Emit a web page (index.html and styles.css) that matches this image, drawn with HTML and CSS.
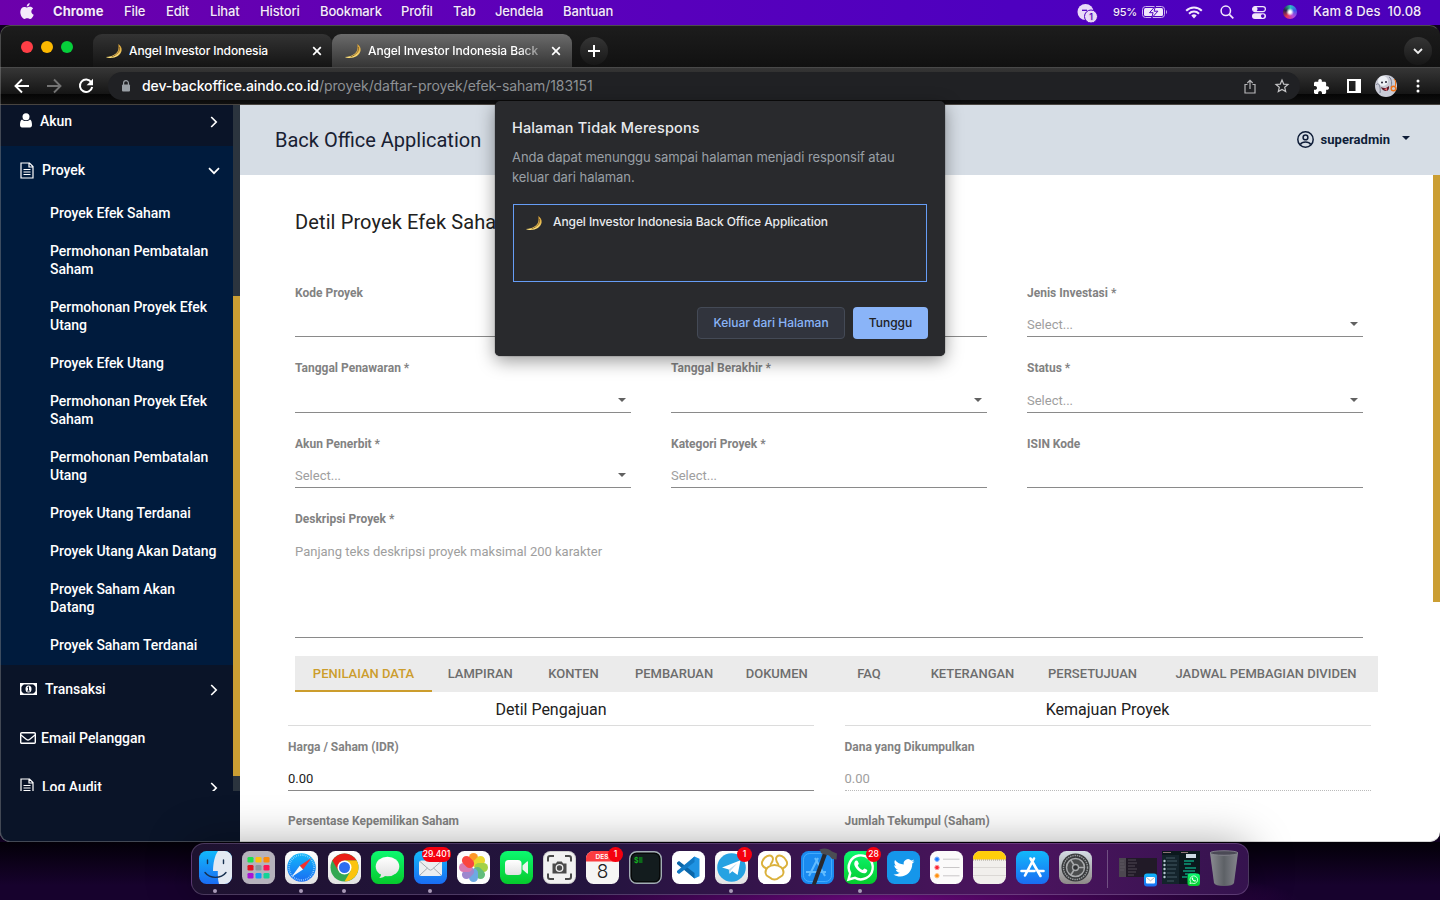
FILE: index.html
```html
<!DOCTYPE html>
<html lang="id">
<head>
<meta charset="utf-8">
<title>Angel Investor Indonesia Back Office Application</title>
<link rel="stylesheet" href="styles.css">
</head>
<body>
<svg class="defs" width="0" height="0">
  <defs>
    <linearGradient id="gold" x1="0" y1="0" x2="0" y2="1"><stop offset="0" stop-color="#d29a30"/><stop offset="1" stop-color="#ffe27a"/></linearGradient>
    <linearGradient id="gBlue" x1="0" y1="0" x2="0" y2="1"><stop offset="0" stop-color="#12b8fb"/><stop offset="1" stop-color="#1a6cf2"/></linearGradient>
    <linearGradient id="gGreen" x1="0" y1="0" x2="0" y2="1"><stop offset="0" stop-color="#0cf870"/><stop offset="1" stop-color="#06c92c"/></linearGradient>
    <linearGradient id="gWhite" x1="0" y1="0" x2="0" y2="1"><stop offset="0" stop-color="#fff"/><stop offset="1" stop-color="#e2e2e2"/></linearGradient>
    <linearGradient id="gGrey" x1="0" y1="0" x2="0" y2="1"><stop offset="0" stop-color="#d4dce4"/><stop offset="1" stop-color="#8e8a88"/></linearGradient>
    <linearGradient id="gTrash" x1="0" y1="0" x2="1" y2="0"><stop offset="0" stop-color="#8b8c92"/><stop offset=".5" stop-color="#5d6166"/><stop offset="1" stop-color="#85868d"/></linearGradient>
    <symbol id="banana" viewBox="0 0 16 16"><path d="M12.300 1C14.500 2.500 16 4.500 15.600 7.500 15 12 10 14.900 4.500 14.900c-2 0-3.500-.3-4.500-1C7 13.600 11.500 10.500 12.300 6.500c.4-2 .3-4 0-5.500z" fill="url(#gold)"/><path d="M13.300 4c1 4-2 8-7.800 9.800" fill="none" stroke="#6d4512" stroke-width=".7"/></symbol>
    <symbol id="doc" viewBox="0 0 14 17"><path d="M1 1h8.500L13 4.500V16H1zM9 1v4h4" fill="none" stroke="currentColor" stroke-width="1.200"/><path d="M3.500 7.500h7M3.500 10h7M3.500 12.500h7" stroke="currentColor" stroke-width="1.200"/></symbol>
    <symbol id="chev" viewBox="0 0 8 12"><path d="M1.200 1l5 5-5 5" fill="none" stroke="currentColor" stroke-width="1.700"/></symbol>
    <symbol id="wa" viewBox="0 0 33 33"><path d="M4.500 28.500l1.700-6.400A12 12 0 1 1 11 26.900z" fill="none" stroke="#fff" stroke-width="2.400"/><path d="M11.500 9.800c1-.7 2-.4 2.400.6l.9 2.100c.2.600-.9 1.600-1 2 1 2 2.600 3.600 4.800 4.400.6-.2 1.400-1.700 2-1.500l2.400 1.300c.8.500-.1 2.700-1.300 3.200-4.500 1.800-12.500-6-11.400-10 .2-.9.600-1.600 1.200-2.100z" fill="#fff"/></symbol>
  </defs>
</svg>

<header class="menubar">
  <nav class="menus">
    <svg class="apple" viewBox="0 0 14 17"><path d="M9.700 0c.1 1.900-1.200 3.400-2.900 3.500C6.600 1.900 8 .3 9.700 0z"/><path d="M7.100 4.500c.7 0 1.500-.7 2.900-.7 1.300 0 2.400.6 3.100 1.600-2.600 1.600-2.200 5.200.6 6.300-.6 1.800-2 4.300-3.700 4.300-1.100 0-1.400-.7-2.800-.7-1.300 0-1.700.7-2.700.7C2.600 16 .3 12.500.3 9.100c0-3.400 2-5.200 4-5.200 1.200 0 2.100.6 2.800.6z"/></svg>
    <b class="m-app">Chrome</b><span class="m-file">File</span><span class="m-edit">Edit</span><span class="m-lihat">Lihat</span><span class="m-hist">Histori</span><span class="m-book">Bookmark</span><span class="m-prof">Profil</span><span class="m-tab">Tab</span><span class="m-jen">Jendela</span><span>Bantuan</span>
  </nav>
  <div class="status">
    <svg class="st-msg" width="21" height="19" viewBox="0 0 21 19"><circle cx="8.500" cy="8" r="8" fill="#e9daf8"/><path d="M5 6.300h5" stroke="#5000bd" stroke-width="1.300"/><circle cx="14" cy="12.500" r="6.500" fill="#e9daf8" stroke="#5000bd"/><text x="14" y="16" font-size="9" text-anchor="middle" fill="#5000bd">1</text></svg>
    <span class="pct">95%</span>
    <svg class="st-bat" width="26" height="12" viewBox="0 0 26 12"><rect x=".5" y=".5" width="22" height="11" rx="3" fill="none" stroke="#cdb3ee"/><rect x="2" y="2" width="19" height="8" rx="1.500" fill="#f2e8fb"/><path d="M24 4v4c1.300-.6 1.300-3.400 0-4z" fill="#cdb3ee"/><path d="M13.500 0L7.500 6.700h3.600L9.700 12l6.200-6.800h-3.800z" fill="#f2e8fb" stroke="#4d00bd" stroke-width="1"/></svg>
    <svg class="st-wifi" width="18" height="13" viewBox="0 0 18 13"><path d="M1.200 4.800a11 11 0 0 1 15.600 0M4 7.700a7 7 0 0 1 10 0" fill="none" stroke="#f2e8fb" stroke-width="2"/><path d="M6.300 9.600a4 4 0 0 1 5.400 0L9 12.500z" fill="#f2e8fb"/></svg>
    <svg class="st-search" width="14" height="14" viewBox="0 0 14 14"><circle cx="5.800" cy="5.800" r="4.700" fill="none" stroke="#f2e8fb" stroke-width="1.500"/><path d="M9.300 9.300l4 4" stroke="#f2e8fb" stroke-width="1.700"/></svg>
    <svg class="st-cc" width="14" height="13" viewBox="0 0 14 13"><rect x=".6" y=".6" width="12.800" height="5" rx="2.500" fill="none" stroke="#f2e8fb" stroke-width="1.200"/><circle cx="3.200" cy="3.100" r="2.400" fill="#f2e8fb"/><rect x="0" y="7.200" width="14" height="5.800" rx="2.900" fill="#f2e8fb"/><circle cx="10.700" cy="10.100" r="1.800" fill="#5000bd"/></svg>
    <i class="siri"></i>
    <span class="date">Kam 8 Des&nbsp; 10.08</span>
  </div>
</header>

<main class="window">
  <div class="tabstrip">
    <div class="lights"><i class="red"></i><i class="amber"></i><i class="green"></i></div>
    <div class="tab">
      <svg class="fav"><use href="#banana"/></svg><span class="tab-title">Angel Investor Indonesia</span>
      <svg class="x" viewBox="0 0 10 10"><path d="M1.200 1.200l7.600 7.600M8.800 1.200L1.200 8.800"/></svg>
    </div>
    <div class="tab current">
      <svg class="fav"><use href="#banana"/></svg><span class="tab-title fade">Angel Investor Indonesia Back</span>
      <svg class="x" viewBox="0 0 10 10"><path d="M1.200 1.200l7.600 7.600M8.800 1.200L1.200 8.800"/></svg>
    </div>
    <div class="round plus"><svg width="12" height="12" viewBox="0 0 12 12"><path d="M6 0v12M0 6h12" stroke="#fff" stroke-width="2"/></svg></div>
    <div class="round more"><svg width="10" height="7" viewBox="0 0 10 7"><path d="M1 1l4 4 4-4" fill="none" stroke="#eee" stroke-width="1.800"/></svg></div>
  </div>

  <div class="toolbar">
    <svg class="nav-i" viewBox="0 0 16 16"><path d="M15 8H2M8 1.500L1.500 8 8 14.500" fill="none" stroke="#fff" stroke-width="1.900"/></svg>
    <svg class="nav-i" viewBox="0 0 16 16"><path d="M1 8h13M8 1.500L14.500 8 8 14.500" fill="none" stroke="#737373" stroke-width="1.900"/></svg>
    <svg class="nav-i" viewBox="0 0 16 16"><path d="M13.300 4.300A6.200 6.200 0 1 0 14.200 9" fill="none" stroke="#fff" stroke-width="2"/><path d="M15 .8v6.400H8.600z" fill="#fff"/></svg>
    <div class="omnibox">
      <svg class="lock" width="8" height="12" viewBox="0 0 8 12"><path d="M1.600 5V3a2.400 2.400 0 0 1 4.800 0v2" fill="none" stroke="#9aa0a6" stroke-width="1.200"/><rect y="4.500" width="8" height="7" rx="1" fill="#9aa0a6"/></svg>
      <span class="url"><b>dev-backoffice.aindo.co.id</b>/proyek/daftar-proyek/efek-saham/183151</span>
      <svg class="share" width="12" height="15" viewBox="0 0 12 15"><path d="M3.500 5.500H1V14h10V5.500H8.500M6 10V1.500M3.300 4L6 1.300 8.700 4" fill="none" stroke="#b5b5b8" stroke-width="1.200"/></svg>
      <svg class="star" width="14" height="14" viewBox="0 0 14 14"><path d="M7 1.100l1.700 4 4.300.4-3.300 2.800 1 4.300L7 10.400l-3.700 2.200 1-4.300L1 5.500l4.300-.4z" fill="none" stroke="#c4c4c6" stroke-width="1.200"/></svg>
    </div>
    <svg class="puzzle" width="15" height="15" viewBox="2 1 21 21"><path d="M20.500 11H19V7c0-1.100-.9-2-2-2h-4V3.500C13 2.120 11.880 1 10.500 1S8 2.120 8 3.500V5H4c-1.100 0-1.990.9-1.990 2v3.800H3.500c1.490 0 2.700 1.210 2.700 2.700s-1.210 2.700-2.700 2.700H2V20c0 1.100.9 2 2 2h3.800v-1.500c0-1.490 1.210-2.700 2.700-2.700 1.490 0 2.700 1.210 2.700 2.700V22H17c1.100 0 2-.9 2-2v-4h1.500c1.380 0 2.500-1.120 2.500-2.500S21.880 11 20.500 11z" fill="#fff"/></svg>
    <svg class="panel" width="14" height="14" viewBox="0 0 14 14"><path d="M0 0h14v14H0zM2 2v10h6.500V2z" fill="#fff" fill-rule="evenodd"/></svg>
    <svg class="avatar" width="22" height="22" viewBox="0 0 22 22"><circle cx="11" cy="11" r="11" fill="#c9cbd6"/><ellipse cx="8" cy="6" rx="5" ry="5" fill="#edf0f5"/><path d="M1 10c3-4 5 3 4 8M14 2c3 2 3 7 2 10" stroke="#777e91" fill="none"/><circle cx="7" cy="7.500" r="1" fill="#223"/><circle cx="11" cy="7" r="1" fill="#223"/><path d="M6 12c3 2 6 1 8-1 .5 3-1 5-3 5s-4.500-1.500-5-4z" fill="#5b1c2b"/><path d="M9 14l3-1v3z" fill="#ee6a70"/><circle cx="18.500" cy="13.500" r="2.300" fill="none" stroke="#f07217" stroke-width="1.500"/><path d="M19 4l1.500 2v5" stroke="#f07217" fill="none"/></svg>
    <svg class="dots" width="4" height="14" viewBox="0 0 4 14" fill="#fff"><circle cx="2" cy="2" r="1.500"/><circle cx="2" cy="7" r="1.500"/><circle cx="2" cy="12" r="1.500"/></svg>
  </div>

  <div class="page">
    <aside class="sidebar">
      <div class="side-scroll">
        <div class="side-list">
          <div class="row first"><svg width="12" height="15" viewBox="0 0 12 15" fill="#fff"><circle cx="6" cy="3.700" r="3.500"/><path d="M2 6.500c2 2 6 2 8 0 1.500.7 2 3 2 5.500 0 1.500-.8 2.500-2 2.500H2c-1.200 0-2-1-2-2.500 0-2.500.5-4.800 2-5.500z"/></svg><span>Akun</span><svg class="chev"><use href="#chev"/></svg></div>
          <div class="group">
            <div class="row"><svg width="14" height="17"><use href="#doc"/></svg><span>Proyek</span><svg class="chev down"><use href="#chev"/></svg></div>
            <a>Proyek Efek Saham</a>
            <a>Permohonan Pembatalan Saham</a>
            <a>Permohonan Proyek Efek Utang</a>
            <a>Proyek Efek Utang</a>
            <a>Permohonan Proyek Efek Saham</a>
            <a>Permohonan Pembatalan Utang</a>
            <a>Proyek Utang Terdanai</a>
            <a>Proyek Utang Akan Datang</a>
            <a>Proyek Saham Akan Datang</a>
            <a>Proyek Saham Terdanai</a>
          </div>
          <div class="row"><svg width="17" height="12" viewBox="0 0 17 12"><rect x=".7" y=".7" width="15.600" height="10.600" fill="none" stroke="#fff" stroke-width="1.400"/><path d="M1 1h3L1 4zM16 1h-3l3 3zM1 11h3L1 8zM16 11h-3l3-3z" fill="#fff"/><ellipse cx="8.500" cy="6" rx="3" ry="3.600" fill="#fff"/><path d="M7.500 4.500l1-.7v4M7.300 8h2.500" stroke="#0a1428" fill="none"/></svg><span>Transaksi</span><svg class="chev"><use href="#chev"/></svg></div>
          <div class="row"><svg width="16" height="12" viewBox="0 0 16 12"><rect x=".7" y=".7" width="14.600" height="10.600" rx="1" fill="none" stroke="#fff" stroke-width="1.400"/><path d="M1 3l5.500 4.500q1.500 1 3 0L15 3" fill="none" stroke="#fff" stroke-width="1.300"/></svg><span class="l-mail">Email Pelanggan</span></div>
          <div class="row"><svg width="14" height="17"><use href="#doc"/></svg><span>Log Audit</span><svg class="chev"><use href="#chev"/></svg></div>
        </div>
        <div class="side-track"><div class="side-thumb"></div></div>
      </div>
    </aside>

    <section class="content">
      <div class="topbar">
        <h1>Back Office Application</h1>
        <div class="user"><svg width="17" height="17" viewBox="0 0 17 17" fill="none" stroke="#0f1d38" stroke-width="1.500"><circle cx="8.500" cy="8.500" r="7.700"/><circle cx="8.500" cy="6.400" r="2.400"/><path d="M3.300 13.500c2-3.200 8.400-3.200 10.400 0"/></svg><b>superadmin</b><i class="caret"></i></div>
      </div>
      <div class="body">
        <div class="form-area">
          <h2>Detil Proyek Efek Saham</h2>
          <div class="form">
            <div class="field"><label>Kode Proyek</label><div class="input"></div></div>
            <div class="field"><label>Nama Proyek *</label><div class="input"></div></div>
            <div class="field"><label>Jenis Investasi *</label><div class="input">Select...<i class="caret"></i></div></div>
            <div class="field"><label>Tanggal Penawaran *</label><div class="input"><i class="caret"></i></div></div>
            <div class="field"><label>Tanggal Berakhir *</label><div class="input"><i class="caret"></i></div></div>
            <div class="field"><label>Status *</label><div class="input">Select...<i class="caret"></i></div></div>
            <div class="field"><label>Akun Penerbit *</label><div class="input">Select...<i class="caret"></i></div></div>
            <div class="field"><label>Kategori Proyek *</label><div class="input">Select...</div></div>
            <div class="field"><label>ISIN Kode</label><div class="input"></div></div>
            <div class="field wide"><label>Deskripsi Proyek *</label><div class="input area">Panjang teks deskripsi proyek maksimal 200 karakter</div></div>
          </div>
          <nav class="tabs"><a class="on">PENILAIAN DATA</a><a>LAMPIRAN</a><a>KONTEN</a><a>PEMBARUAN</a><a>DOKUMEN</a><a>FAQ</a><a>KETERANGAN</a><a>PERSETUJUAN</a><a>JADWAL PEMBAGIAN DIVIDEN</a></nav>
          <div class="details">
            <div><h3>Detil Pengajuan</h3><div class="field"><label>Harga / Saham (IDR)</label><div class="input value">0.00</div></div><div class="field"><label>Persentase Kepemilikan Saham</label></div></div>
            <div><h3>Kemajuan Proyek</h3><div class="field"><label>Dana yang Dikumpulkan</label><div class="input off">0.00</div></div><div class="field"><label>Jumlah Tekumpul (Saham)</label></div></div>
          </div>
        </div>
        <div class="main-thumb"></div>
      </div>
    </section>
  </div>

  <div class="dialog">
    <h4>Halaman Tidak Merespons</h4>
    <p>Anda dapat menunggu sampai halaman menjadi responsif atau keluar dari halaman.</p>
    <div class="list"><svg class="fav"><use href="#banana"/></svg><span>Angel Investor Indonesia Back Office Application</span></div>
    <div class="actions"><button class="quit">Keluar dari Halaman</button><button class="wait">Tunggu</button></div>
  </div>
</main>

<footer class="desktop">
  <div class="dock">
    <div class="app run"><svg viewBox="0 0 33 33"><rect width="33" height="33" rx="7.500" fill="url(#gBlue)"/><path d="M19 0h6.500A7.500 7.500 0 0 1 33 7.500v18a7.500 7.500 0 0 1-7.500 7.500H20c-1-4-1.300-8-1.200-13H14C14.200 12 15.500 5 19 0z" fill="#e3e9f2"/><path d="M8.500 9v3.500M24.500 9v3.500M6 21.500c5 6.500 16 6.500 21 0" fill="none" stroke="#173050" stroke-width="1.400" stroke-linecap="round"/></svg></div>
    <div class="app"><svg viewBox="0 0 33 33"><rect width="33" height="33" rx="7.500" fill="#b6b2bc"/><g><rect x="5.500" y="6" width="6" height="5.500" rx="1.300" fill="#1de052"/><rect x="13.500" y="6" width="6" height="5.500" rx="1.300" fill="#fdc10c"/><rect x="21.500" y="6" width="6" height="5.500" rx="1.300" fill="#fb8a0c"/><rect x="5.500" y="14" width="6" height="5.500" rx="1.300" fill="#e4121f"/><rect x="13.500" y="14" width="6" height="5.500" rx="1.300" fill="#8a969c"/><rect x="21.500" y="14" width="6" height="5.500" rx="1.300" fill="#fb1557"/><rect x="5.500" y="22" width="6" height="5.500" rx="1.300" fill="#a713d6"/><rect x="13.500" y="22" width="6" height="5.500" rx="1.300" fill="#119df5"/><rect x="21.500" y="22" width="6" height="5.500" rx="1.300" fill="#13d396"/></g></svg></div>
    <div class="app run"><svg viewBox="0 0 33 33"><rect width="33" height="33" rx="7.500" fill="url(#gWhite)"/><circle cx="16.500" cy="16.500" r="14.300" fill="url(#gBlue)"/><circle cx="16.500" cy="16.500" r="12.500" fill="none" stroke="#b7e3ff" stroke-width="1.800" stroke-dasharray=".6 1.300"/><path d="M26.500 7L18 18.500 14.700 14.700z" fill="#f6302f"/><path d="M6.500 26l8.200-11.300L18 18.500z" fill="#f4f6fa"/></svg></div>
    <div class="app run"><svg viewBox="0 0 33 33"><rect width="33" height="33" rx="7.500" fill="url(#gWhite)"/><circle cx="16.500" cy="16.500" r="14" fill="#34a853"/><path d="M4.380 9.500A14 14 0 0 1 28.620 9.500H16.500l-6 10.500z" fill="#ea1f18"/><path d="M28.620 9.500A14 14 0 0 1 16.500 30.500L22.560 20 16.500 9.500z" fill="#fbc40e"/><circle cx="16.500" cy="16.500" r="7" fill="#fff"/><circle cx="16.500" cy="16.500" r="5.500" fill="#2e6df0"/></svg></div>
    <div class="app"><svg viewBox="0 0 33 33"><rect width="33" height="33" rx="7.500" fill="url(#gGreen)"/><ellipse cx="16.500" cy="15.500" rx="11.800" ry="9.800" fill="url(#gWhite)"/><path d="M10 22c.3 2.500-.6 4-2 5 3 0 5.500-1.200 7-3z" fill="#e6e6e6"/></svg></div>
    <div class="app run"><svg viewBox="0 0 33 33"><rect width="33" height="33" rx="7.500" fill="url(#gBlue)"/><rect x="5" y="9.500" width="23" height="15.500" rx="2.500" fill="#eceef0"/><path d="M6 10.500l9 8q1.500 1.300 3 0l9-8M6 24l7.500-7M27 24l-7.500-7" fill="none" stroke="#a6acb2" stroke-width="1"/></svg><em class="badge long">29.401</em></div>
    <div class="app"><svg viewBox="0 0 33 33"><rect width="33" height="33" rx="7.500" fill="#fdfdfd"/><g opacity=".88"><rect x="12" y="2" width="9" height="13.500" rx="4.500" fill="#ff8a0c"/><rect x="12" y="2" width="9" height="13.500" rx="4.500" fill="#e8d413" transform="rotate(45 16.500 16.500)"/><rect x="12" y="2" width="9" height="13.500" rx="4.500" fill="#98cb2c" transform="rotate(90 16.500 16.500)"/><rect x="12" y="2" width="9" height="13.500" rx="4.500" fill="#4eb56c" transform="rotate(135 16.500 16.500)"/><rect x="12" y="2" width="9" height="13.500" rx="4.500" fill="#5a9ee0" transform="rotate(180 16.500 16.500)"/><rect x="12" y="2" width="9" height="13.500" rx="4.500" fill="#8f78c8" transform="rotate(225 16.500 16.500)"/><rect x="12" y="2" width="9" height="13.500" rx="4.500" fill="#d46aa6" transform="rotate(270 16.500 16.500)"/><rect x="12" y="2" width="9" height="13.500" rx="4.500" fill="#fa2d24" transform="rotate(315 16.500 16.500)"/></g></svg></div>
    <div class="app"><svg viewBox="0 0 33 33"><rect width="33" height="33" rx="7.500" fill="url(#gGreen)"/><rect x="5" y="9" width="16.500" height="15" rx="3.500" fill="url(#gWhite)"/><path d="M22.500 14.500l4.500-4q1-.6 1 .5v11q0 1-1 .5l-4.500-4z" fill="#e9f5ec"/></svg></div>
    <div class="app"><svg viewBox="0 0 33 33"><rect width="33" height="33" rx="7.500" fill="#cfcfcf"/><rect x="1" y="1" width="31" height="31" rx="6.500" fill="#f1f1f1"/><path d="M5 10.500V7q0-2 2-2h4M22 5h4q2 0 2 2v3.500M28 22.500V26q0 2-2 2h-4M11 28H7q-2 0-2-2v-3.500" fill="none" stroke="#4a4a4a" stroke-width="2"/><path d="M9.500 12.500h3.300l1.500-2h4.400l1.500 2h3.300v10h-14z" fill="#4b4b4b"/><circle cx="16.500" cy="17" r="3.300" fill="#4b4b4b" stroke="#eee" stroke-width="1.300"/></svg></div>
    <div class="app"><svg viewBox="0 0 33 33"><rect width="33" height="33" rx="7.500" fill="#f6f5f4"/><path d="M0 10.500v-3A7.500 7.500 0 0 1 7.500 0h18A7.500 7.500 0 0 1 33 7.500v3z" fill="#fb3c3f"/><text x="16" y="8" font-size="6.500" font-weight="600" fill="#fff" text-anchor="middle">DES</text><text x="16.500" y="27" font-size="19" font-weight="300" fill="#222" text-anchor="middle">8</text></svg><em class="badge">1</em></div>
    <div class="app"><svg viewBox="0 0 33 33"><rect x=".7" y=".7" width="31.600" height="31.600" rx="7" fill="#060808" stroke="#a3aeb5" stroke-width="1.400"/><rect x="3" y="3" width="27" height="27" rx="4.500" fill="#131c1e"/><text x="5" y="11.500" font-size="7" font-weight="700" fill="#14b321">$</text><rect x="10" y="6" width="3.500" height="6" fill="#0c6c19"/></svg></div>
    <div class="app"><svg viewBox="0 0 33 33"><rect width="33" height="33" rx="7.500" fill="#fff"/><path d="M22.500 5.500l5 2.300v17.400l-5 2.300-12-11z" fill="#1f93e2"/><path d="M5 11.500l2-1.500 15.500 12v5.500L5 13z" fill="#0a65a8"/><path d="M5 21.500l2 1.500 15.500-12V5.500L5 20z" fill="#1179c4"/></svg></div>
    <div class="app run"><svg viewBox="0 0 33 33"><rect width="33" height="33" rx="7.500" fill="url(#gWhite)"/><circle cx="16.500" cy="16.500" r="14.300" fill="#26a2e2"/><path d="M7 16.500l18.500-7.200L22.600 24l-5.300-3.700-2.700 2.500-.8-4.300z" fill="#fff"/><path d="M13.800 18.500l8.500-6.300-6.600 7.200-1.100 3.400z" fill="#b9dcf2"/></svg><em class="badge">1</em></div>
    <div class="app"><svg viewBox="0 0 33 33"><rect width="33" height="33" rx="7.500" fill="#fff"/><g fill="none" stroke="#dbb13c" stroke-width="1.900"><path d="M8.500 17.500c-4-1.500-5.500-4.500-4-7.500 2-4.500 7-7 9.500-4.500 2 2.200 1 5-1.700 8.500M24.500 17.500c4-1.500 5.500-4.500 4-7.500-2-4.500-7-7-9.500-4.500-2 2.200-1 5 1.700 8.500"/><path d="M16.500 14c5 0 9.500 3.500 9 8-.4 3.500-3.500 3.500-5 5-1.800 2-6.200 2-8 0-1.500-1.500-4.600-1.500-5-5-.5-4.500 4-8 9-8z"/></g></svg></div>
    <div class="app"><svg viewBox="0 0 33 33"><rect width="33" height="33" rx="7.500" fill="#1a8af0"/><rect x="2.500" y="2.500" width="28" height="28" rx="6" fill="none" stroke="#4fb3ff" stroke-width=".8"/><path d="M17 7L8 25M14 7l10 18M5 21h20" stroke="#62bcff" stroke-width="2" fill="none"/><path d="M22 2l4 1.500L14.500 34.500l-3.500-1.500z" fill="#29292f"/><path d="M18.500-1.500c5-2 9-1 12.500 2l5 2-.5 6-4.500-.5-3-3.500-7.500-2z" fill="#4b4d53"/></svg></div>
    <div class="app run"><svg viewBox="0 0 33 33"><rect width="33" height="33" rx="7.500" fill="url(#gGreen)"/><use href="#wa" width="33" height="33"/></svg><em class="badge">28</em></div>
    <div class="app"><svg viewBox="0 0 33 33"><rect width="33" height="33" rx="7.500" fill="#1596ea"/><path d="M27.500 10.200c-.8.400-1.600.6-2.500.7.900-.5 1.600-1.400 1.900-2.400-.8.500-1.800.9-2.700 1.100a4.300 4.300 0 0 0-7.400 3.900c-3.600-.2-6.700-1.900-8.800-4.500-1.100 2-.6 4.500 1.300 5.800-.7 0-1.400-.2-2-.5 0 2.100 1.500 3.900 3.500 4.300-.6.200-1.300.2-2 .1.600 1.700 2.100 2.900 4 3A8.700 8.700 0 0 1 6.500 23.400c8.500 5.300 18.900-.5 18.800-11 .9-.6 1.600-1.400 2.200-2.200z" fill="#fff"/></svg></div>
    <div class="app"><svg viewBox="0 0 33 33"><rect width="33" height="33" rx="7.500" fill="#fbfafa"/><path d="M13 8.200h16.500M13 16.500h16.500M13 24.800h16.500" stroke="#c9c7c8"/><g stroke-width="1"><circle cx="7" cy="8.200" r="2.200" fill="#1876ff" stroke="#7cb1ff"/><circle cx="7" cy="16.500" r="2.200" fill="#fb2534" stroke="#ff949a"/><circle cx="7" cy="24.800" r="2.200" fill="#ff8e0c" stroke="#ffc888"/></g></svg></div>
    <div class="app"><svg viewBox="0 0 33 33"><rect width="33" height="33" rx="7.500" fill="#f1efec"/><path d="M0 8.500v-1A7.500 7.500 0 0 1 7.500 0h18A7.500 7.500 0 0 1 33 7.500v1z" fill="#ffce0b"/><path d="M0 9h33" stroke="#8f8978" stroke-width=".8" stroke-dasharray="1 1"/><path d="M0 16.500h33M0 24.500h33" stroke="#d5d2cf" stroke-width=".8"/></svg></div>
    <div class="app"><svg viewBox="0 0 33 33"><rect width="33" height="33" rx="7.500" fill="url(#gBlue)"/><path d="M18 7.500L9 24.500M14.500 7.500L24.500 25M5.500 20h13M22.500 20h5" stroke="#fff" stroke-width="2.600" stroke-linecap="round" fill="none"/></svg></div>
    <div class="app"><svg viewBox="0 0 33 33"><rect width="33" height="33" rx="7.500" fill="url(#gGrey)"/><circle cx="16.500" cy="16.500" r="14" fill="#37393b"/><circle cx="16.500" cy="16.500" r="12" fill="none" stroke="#96999b" stroke-width="1.500" stroke-dasharray="1.500 .8"/><circle cx="16.500" cy="16.500" r="9" fill="#4b4d4e" stroke="#a7a9ab" stroke-width="1.500"/><circle cx="16.500" cy="16.500" r="3" fill="#303234" stroke="#a7a9ab" stroke-width="1.300"/><path d="M19 16.500h6.500M15 14l-3.500-5.500M15 19l-3.500 5.500" stroke="#a7a9ab" stroke-width="1.600"/></svg></div>
    <i class="sep"></i>
    <div class="mini"><svg width="38" height="33" viewBox="0 0 38 33"><rect y="7" width="38" height="19" fill="#211a27"/><rect y="7" width="7" height="19" fill="#4c4750"/><path d="M1 10h4M1 13h4M1 16h5M1 19h4M9 9h8M9 12h9M9 15h7M9 18h9M9 21h8M9 24h6" stroke="#645e69" stroke-width=".7"/><rect x="25" y="22.500" width="13" height="13" rx="3" fill="url(#gBlue)"/><rect x="27" y="26" width="9" height="6.500" rx="1" fill="#fff"/><path d="M27.500 26.500l4 3.300 4-3.300" fill="none" stroke="#999" stroke-width=".7"/></svg></div>
    <div class="mini"><svg width="38" height="33" viewBox="0 0 38 33"><rect width="38" height="33" fill="#0b181d"/><rect y="4" width="17" height="29" fill="#14242c"/><path d="M4 7h9M5 10h10M5 14h10M5 18h9M5 22h8M5 26h10M5 30h7" stroke="#435862" stroke-width="1"/><g fill="#b8c8d2"><circle cx="2.500" cy="10" r="1.200"/><circle cx="2.500" cy="14" r="1.200"/><circle cx="2.500" cy="18" r="1.200"/><circle cx="2.500" cy="22" r="1.200"/><circle cx="2.500" cy="26" r="1.200"/></g><rect x="24" y="3" width="10" height="4" fill="#ced9e4"/><path d="M22 10h10M22 13h7M23 17h11M21 20h12M23 23h11M20 26h5" stroke="#0c7b62" stroke-width="1.800"/><path d="M1 1.500h8M19 1.500h7" stroke="#8a7474"/><rect x="25.500" y="22.500" width="12.500" height="12.500" rx="3" fill="url(#gGreen)"/><use href="#wa" x="26.500" y="23.500" width="10.500" height="10.500"/></svg></div>
    <div class="trash"><svg width="30" height="37" viewBox="0 0 30 37"><path d="M1 3l4 30q1 3 10 3t10-3l4-30z" fill="url(#gTrash)"/><ellipse cx="15" cy="3" rx="14" ry="2.300" fill="#4b4a56" stroke="#8d8d96" stroke-width=".8"/></svg></div>
  </div>
</footer>
</body>
</html>
```

FILE: styles.css
```css
* { box-sizing: border-box; }
body { margin: 0; width: 1440px; height: 900px; overflow: hidden; display: flex; flex-direction: column; background: #100020; font-family: Inter, "Liberation Sans", sans-serif; }
svg { display: block; flex: none; overflow: visible; }
.defs { position: absolute; }
h1, h2, h3, h4, p { margin: 0; font-weight: 400; }

/* menu bar */
.menubar { flex: none; height: 25px; display: flex; justify-content: space-between; color: #f4ebfb; font-size: 13px; font-weight: 500; background: linear-gradient(90deg, #6c00ab, #5b00bb 40%, #4e00bf 70%, #4d00bb); text-shadow: 0 1px 2px rgba(0,0,0,.25); }
.menus { display: flex; align-items: center; height: 22px; padding-left: 20px; white-space: nowrap; letter-spacing: -.14px; }
.apple { width: 14px; height: 17px; fill: #f4ebfb; margin: 1px 19px 0 0; }
.m-app { width: 71px; font-weight: 700; letter-spacing: .05px; }
.m-file { width: 42px; } .m-edit { width: 44px; } .m-lihat { width: 50px; } .m-hist { width: 60px; } .m-book { width: 81px; } .m-prof { width: 52px; } .m-tab { width: 42px; } .m-jen { width: 68px; }
.status { display: flex; align-items: center; height: 24px; white-space: nowrap; padding-right: 18px; }
.st-msg { margin: 2px 15px 0 0; }
.pct { font-size: 11px; width: 29px; letter-spacing: -.2px; }
.st-bat { margin-right: 17px; }
.st-wifi { margin-right: 17px; }
.st-search { margin-right: 18px; }
.st-cc { margin-right: 17px; }
.siri { width: 14px; height: 14px; border-radius: 50%; margin-right: 16px; background: radial-gradient(circle, #fff 0 12%, transparent 40%), conic-gradient(#2bc5c0, #3d58e8, #b748dc, #e4365b, #272147, #28c09c); }
.date { width: 109px; letter-spacing: .05px; padding-bottom: 2px; }

/* browser window */
.window { position: relative; flex: none; height: 817px; background: #161616; border-radius: 10px; overflow: hidden; display: flex; flex-direction: column; }
.window::after { content: ""; position: absolute; inset: 0; border: 1px solid rgba(150,150,150,.4); border-right-color: transparent; border-radius: 10px; pointer-events: none; }
.tabstrip { flex: none; height: 42px; display: flex; align-items: flex-end; background: linear-gradient(#1d1d1d, #111); color: #fff; }
.lights { display: flex; gap: 8px; padding: 0 20px 14px 21px; }
.lights i { width: 12px; height: 12px; border-radius: 50%; }
.red { background: #fe3e46; } .amber { background: #fdb900; } .green { background: #06cf3b; }
.tab { display: flex; align-items: center; width: 239px; height: 33px; padding: 0 10px 0 13px; border-radius: 9px 9px 0 0; background: linear-gradient(#333, #141414); }
.tab.current { background: linear-gradient(#6b6b6b, #353535); width: 240px; padding-right: 11px; }
.fav { width: 16px; height: 16px; margin-right: 7px; }
.tab-title { flex: 1; font-size: 12px; font-weight: 500; white-space: nowrap; overflow: hidden; letter-spacing: -.11px; }
.fade { -webkit-mask-image: linear-gradient(90deg, #000 88%, rgba(0,0,0,.35)); mask-image: linear-gradient(90deg, #000 88%, rgba(0,0,0,.35)); }
.x { width: 10px; height: 10px; margin-left: 12px; stroke: #fff; stroke-width: 1.700; }
.round { width: 28px; height: 28px; border-radius: 50%; display: grid; place-items: center; background: linear-gradient(#353535, #171717); margin: 0 8px 2px; }
.more { margin-left: auto; }
.toolbar { flex: none; height: 38px; display: flex; align-items: center; border-top: 1px solid #494949; border-bottom: 1px solid #484440; padding-left: 14px; background: linear-gradient(#363636, #151515 72%, #050505 73%, #101010); }
.nav-i { width: 16px; height: 16px; margin-right: 16px; }
.omnibox { width: 1192px; height: 28px; margin-left: -2px; border-radius: 14px; background: #202124; display: flex; align-items: center; padding: 0 11px 0 14px; font-size: 14px; color: #8e9195; }
.lock { margin-right: 12px; }
.url { flex: 1; white-space: nowrap; letter-spacing: -.07px; padding-bottom: 2px; }
.url b { color: #fff; font-weight: 500; letter-spacing: -.11px; }
.share { margin-right: 19px; }
.puzzle { margin-left: 14px; } .panel { margin-left: 18px; } .avatar { margin-left: 14px; } .dots { margin-left: 19px; }

/* page */
.page { flex: 1; min-height: 0; display: flex; font-family: Roboto, sans-serif; background: #fff; }
.sidebar { width: 240px; flex: none; background: #0a1428; color: #fff; }
.side-scroll { height: 686px; display: flex; overflow: hidden; }
.side-list { width: 233px; font-size: 14px; font-weight: 500; letter-spacing: -.03px; }
.row { display: flex; align-items: center; height: 49px; padding: 0 15px 2px 20px; }
.row span { flex: 1; margin-left: 8px; }
.row .l-mail { margin-left: 5px; }
.row.first { height: 41px; padding-bottom: 10px; }
.chev { width: 8px; height: 12px; margin-top: 3px; }
.chev.down { transform: rotate(90deg); margin-top: 1px; }
.group { background: #001b3d; height: 519px; }
.group .row { height: 48px; padding-bottom: 0; }
.group a { display: block; padding: 10px 15px 10px 50px; line-height: 18px; }
.side-track { width: 7px; background: #2b343e; padding-top: 191px; }
.side-thumb { height: 480px; background: #cb9e33; }
.content { flex: 1; display: flex; flex-direction: column; min-width: 0; color: #212121; }
.topbar { flex: none; height: 70px; background: #d6dde5; display: flex; align-items: center; justify-content: space-between; padding: 0 30px 0 35px; color: #182032; }
.topbar h1 { font-size: 20px; }
.user { display: flex; align-items: center; font-size: 13px; color: #0f1d38; padding-bottom: 2px; }
.user b { margin: 0 12px 0 7px; letter-spacing: .03px; }
.caret { border: 4px solid transparent; border-top-color: #616161; border-bottom: 0; }
.user .caret { border-top-color: #0f1d38; margin-top: -3px; }
.body { flex: 1; min-height: 0; overflow: hidden; display: flex; justify-content: space-between; }
.form-area { width: 1138px; padding-left: 55px; }
h2 { font-size: 20px; line-height: 30px; padding-top: 32px; height: 109px; letter-spacing: .12px; }
.form { width: 1068px; display: grid; grid-template-columns: 336px 316px 336px; column-gap: 40px; grid-template-rows: repeat(3, 75.5px) 127.5px; }
label { display: block; margin: -.4px 0 .4px; font-size: 12px; font-weight: 700; line-height: 18px; color: #828282; }
.input { display: flex; align-items: flex-start; justify-content: space-between; height: 35px; padding-top: 12px; font-size: 13px; line-height: 22px; border-bottom: 1px solid #8a8a8a; color: #9e9e9e; }
.input .caret { margin: 8.400px 5px 0 auto; }
.wide { grid-column: 1 / -1; }
.area { height: 109.500px; }
.tabs { width: 1083px; height: 36px; margin-top: 18px; display: grid; grid-template-rows: 36px; grid-template-columns: 137px 96.500px 90px 111px 94.500px 90px 117px 123px 224px; background: #ebebeb; color: #6d6d6d; font-size: 13px; font-weight: 500; line-height: 36px; text-align: center; }
.tabs .on { color: #cc9d2d; height: 36px; border-bottom: 2px solid #cc9d2d; }
.details { display: grid; grid-template-columns: 526px 526px; gap: 30.500px; margin-left: -7px; }
h3 { font-size: 16px; line-height: 32px; padding-top: 2px; height: 34px; text-align: center; border-bottom: 1px solid #dcdcdc; margin-bottom: 12px; }
.details .field { height: 75px; }
.details .value { color: #212121; }
.off { border-bottom: 1px dotted #bbb; }
.main-thumb { width: 7px; height: 427px; background: #cb9e33; }

/* page-unresponsive dialog */
.dialog { position: absolute; left: 495px; top: 76px; width: 450px; height: 255px; padding: 17px 17px 16px; background: #292a2d; border-radius: 5px; box-shadow: 0 0 1px #000, 0 5px 18px rgba(0,0,0,.4); color: #e8eaed; }
h4 { font-size: 14.500px; line-height: 20px; font-weight: 450; letter-spacing: .14px; }
.dialog p { margin-top: 9px; font-size: 13px; line-height: 20px; color: #9aa0a6; letter-spacing: -.06px; }
.list { margin: 17px 0 0 1px; height: 78px; width: 414px; border: 1px solid #669df6; padding: 10px 12px; display: flex; font-size: 12px; font-weight: 500; line-height: 14px; letter-spacing: -.09px; }
.list .fav { margin-right: 11px; }
.actions { display: flex; justify-content: flex-end; gap: 8px; margin-top: 25px; }
button { height: 32px; border-radius: 4px; font: 500 12px Inter, sans-serif; padding: 0 0 2px; white-space: nowrap; }
.quit { width: 148px; border: 1px solid #444a56; background: #31343d; color: #8ab4f8; }
.wait { width: 75px; border: 0; background: #8ab4f8; color: #202124; }

/* desktop and dock */
.desktop { flex: 1; background: radial-gradient(ellipse 420px 40px at 880px 58px, #780a8c, rgba(60,5,90,0)), linear-gradient(#030008, #17022d 75%); padding: 1px 0 0 191px; }
.dock { position: relative; width: 1058px; height: 52px; padding: 7px 0 0 7px; display: flex; border: 1px solid rgba(180,150,200,.3); border-radius: 13px; background: linear-gradient(90deg, #1e1230, #24143f 38%, #3b1450 60%, #4c145f 78%, #35134e); box-shadow: 0 0 44px rgba(0,0,0,.34); }
.app { position: relative; width: 33px; height: 33px; margin-right: 10px; }
.app svg { width: 33px; height: 33px; }
.run::after { content: ""; position: absolute; left: 14px; top: 38px; width: 4px; height: 4px; border-radius: 50%; background: #aa9bb9; }
.badge { position: absolute; right: -4px; top: -4px; min-width: 15px; height: 15px; border-radius: 8px; background: #f5000f; color: #fff; font: 500 8.500px/15px Inter, sans-serif; text-align: center; }
.badge.long { width: 29px; height: 15px; }
.sep { width: 1px; height: 38px; margin: -1px 11px 0 5px; background: #715083; }
.mini { width: 38px; margin-right: 5px; }
.trash { margin: -1px 0 0 4px; }
```
